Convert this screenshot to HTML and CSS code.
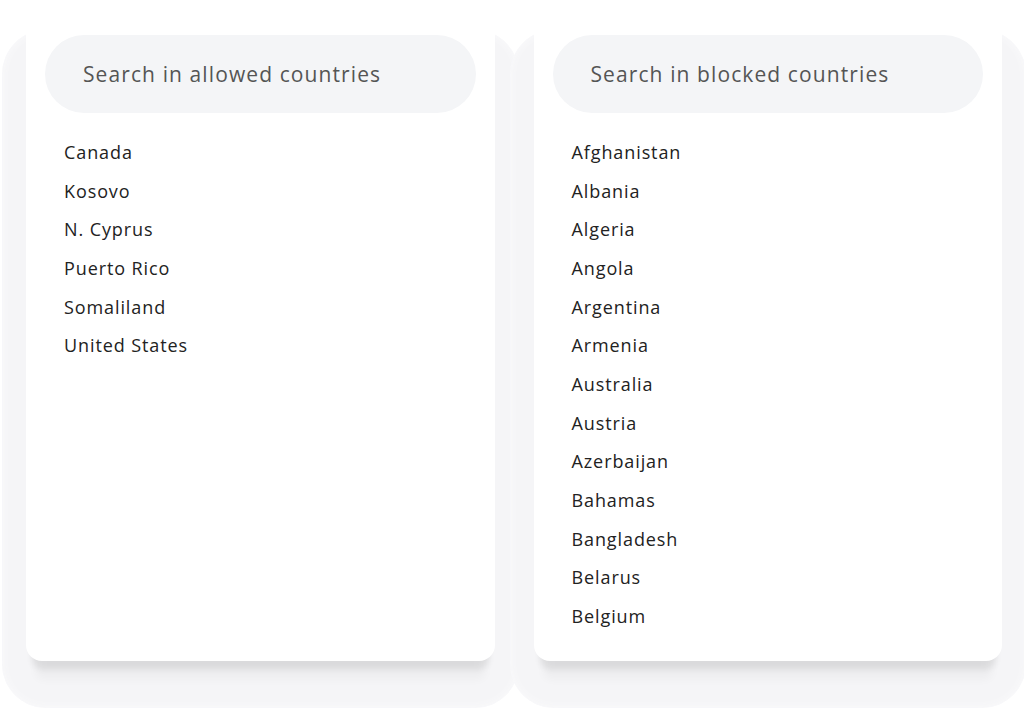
FILE: index.html
```
<!DOCTYPE html>
<html lang="en">
<head>
  <meta charset="UTF-8" />
  <meta name="viewport" content="width=device-width, initial-scale=1.0" />
  <title>Country access</title>
  <link rel="stylesheet" href="styles.css">
</head>
<body>
  <div class="lists">
    <div class="panel">
      <input class="search" type="text" placeholder="Search in allowed countries" />
      <ul class="countries">
        <li>Canada</li>
        <li>Kosovo</li>
        <li>N. Cyprus</li>
        <li>Puerto Rico</li>
        <li>Somaliland</li>
        <li>United States</li>
      </ul>
    </div>

    <div class="panel">
      <input class="search" type="text" placeholder="Search in blocked countries" />
      <ul class="countries">
        <li>Afghanistan</li>
        <li>Albania</li>
        <li>Algeria</li>
        <li>Angola</li>
        <li>Argentina</li>
        <li>Armenia</li>
        <li>Australia</li>
        <li>Austria</li>
        <li>Azerbaijan</li>
        <li>Bahamas</li>
        <li>Bangladesh</li>
        <li>Belarus</li>
        <li>Belgium</li>
      </ul>
    </div>
  </div>
</body>
</html>
```

FILE: styles.css
```
body {
  margin: 0;
  background-color: #fff;
  font-family: "Open Sans", Arial, sans-serif;
}
.lists {
  display: flex;
  align-items: stretch;
  gap: 39px;
  padding: 0 22px 68px 26px;
  overflow: hidden;
}
.panel {
  position: relative;
  flex: 1;
  background-color: #fff;
  border-radius: 0 0 16px 16px;
  padding: 35px 19px 25px;
  box-shadow: 0 14px 6px -6px rgba(0, 0, 0, 0.08), 0 28px 10px -10px rgba(0, 0, 0, 0.035);
}
.panel::before {
  content: "";
  position: absolute;
  top: 30px;
  left: -24px;
  right: -24px;
  bottom: -47px;
  background-color: #f5f5f7;
  border-radius: 44px;
  box-shadow: inset 0 0 10px #fbfbfc;
  z-index: -1;
}
.search {
  display: block;
  box-sizing: border-box;
  width: 100%;
  height: 78px;
  border: none;
  border-radius: 39px;
  background-color: #f4f5f7;
  padding: 0 38px;
  font-family: inherit;
  font-size: 21px;
  letter-spacing: 1.1px;
  color: #333;
  outline: none;
}
.search::placeholder {
  color: #555;
}
.countries {
  list-style: none;
  margin: 20px 0 0;
  padding: 0 19px;
}
.countries li {
  font-size: 18px;
  letter-spacing: 0.9px;
  line-height: 38.67px;
  color: #222;
}
```
